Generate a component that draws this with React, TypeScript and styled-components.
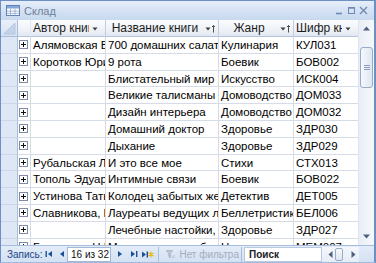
import { FC } from 'react';
import styled, { createGlobalStyle } from 'styled-components';

const GlobalStyle = createGlobalStyle`
  html, body {
    margin: 0;
    padding: 0;
  }
  body {
    background: #c4d7ef;
    font-family: 'Liberation Sans', Arial, sans-serif;
  }
`;

type Row = [string, string, string, string];

const rows: Row[] = [
  ['Алямовская Валентина', '700 домашних салатов', 'Кулинария', 'КУЛ031'],
  ['Коротков Юрий', '9 рота', 'Боевик', 'БОВ002'],
  ['', 'Блистательный мир Египта', 'Искусство', 'ИСК004'],
  ['', 'Великие талисманы', 'Домоводство', 'ДОМ033'],
  ['', 'Дизайн интерьера', 'Домоводство', 'ДОМ032'],
  ['', 'Домашний доктор', 'Здоровье', 'ЗДР030'],
  ['', 'Дыхание', 'Здоровье', 'ЗДР029'],
  ['Рубальская Лариса', 'И это все мое', 'Стихи', 'СТХ013'],
  ['Тополь Эдуард,', 'Интимные связи', 'Боевик', 'БОВ022'],
  ['Устинова Татьяна', 'Колодец забытых желаний', 'Детектив', 'ДЕТ005'],
  ['Славникова, Быков', 'Лауреаты ведущих литературных', 'Беллетристика', 'БЕЛ006'],
  ['', 'Лечебные настойки,', 'Здоровье', 'ЗДР027'],
  ['Бехтерева Н.Г.', 'Магия мозга и лабиринты жизни', 'Научные мемуары', 'МЕМ007'],
];

const headers: { title: string; sorted?: boolean }[] = [
  { title: 'Автор книги' },
  { title: 'Название книги', sorted: true },
  { title: 'Жанр', sorted: true },
  { title: 'Шифр книги' },
];

const TableIcon = () => (
  <svg width="14" height="11" viewBox="0 0 14 11">
    <rect x="0.5" y="0.5" width="13" height="10" fill="#fff" stroke="#5f83b8" />
    <rect x="1" y="1" width="12" height="2.5" fill="#86a8d8" />
    <path d="M4.5 3.5v7M9 3.5v7M1 6.2h12M1 8.4h12" stroke="#8fa9cf" strokeWidth="0.8" />
  </svg>
);

const MinIcon = () => (
  <svg width="9" height="9" viewBox="0 0 9 9">
    <path d="M1 7.5h6" stroke="#6f89b0" strokeWidth="1.6" />
  </svg>
);

const MaxIcon = () => (
  <svg width="9" height="9" viewBox="0 0 9 9">
    <rect x="1.5" y="1.5" width="6" height="6" fill="none" stroke="#6f89b0" strokeWidth="1" />
    <path d="M1.5 2h6" stroke="#6f89b0" strokeWidth="1.4" />
  </svg>
);

const CloseIcon = () => (
  <svg width="9" height="9" viewBox="0 0 9 9">
    <path d="M1 1l7 7M8 1l-7 7" stroke="#6f89b0" strokeWidth="1.3" />
  </svg>
);

const CornerIcon = () => (
  <svg width="13" height="13" viewBox="0 0 13 13">
    <polygon points="12,1 12,12 1,12" fill="#c3d3ea" stroke="#aebfd9" strokeWidth="0.8" />
  </svg>
);

const PlusBox = () => (
  <svg width="9" height="9" viewBox="0 0 9 9">
    <rect x="0.5" y="0.5" width="8" height="8" fill="#fff" stroke="#7d8ba3" />
    <path d="M2 4.5h5M4.5 2v5" stroke="#111" strokeWidth="1" />
  </svg>
);

const DropArrow: FC<{ sorted?: boolean }> = ({ sorted }) => (
  <svg width="11" height="9" viewBox="0 0 11 9">
    <polygon points="0.5,3.5 5.5,3.5 3,6.5" fill="#3d3d3d" />
    {sorted && <path d="M8.5 1.5v7M7 3l1.5-1.5L10 3" stroke="#3d3d3d" strokeWidth="0.9" fill="none" />}
  </svg>
);

const NavFirst = () => (
  <svg width="8" height="8" viewBox="0 0 8 8">
    <rect x="0.5" y="1" width="1.4" height="6" fill="#1e4f93" />
    <polygon points="7,1 7,7 3,4" fill="#1e4f93" />
  </svg>
);

const NavPrev = () => (
  <svg width="6" height="8" viewBox="0 0 6 8">
    <polygon points="5,1 5,7 1,4" fill="#1e4f93" />
  </svg>
);

const NavNext = () => (
  <svg width="6" height="8" viewBox="0 0 6 8">
    <polygon points="1,1 1,7 5,4" fill="#1e4f93" />
  </svg>
);

const NavLast = () => (
  <svg width="8" height="8" viewBox="0 0 8 8">
    <polygon points="1,1 1,7 5,4" fill="#1e4f93" />
    <rect x="6" y="1" width="1.4" height="6" fill="#1e4f93" />
  </svg>
);

const NavNew = () => (
  <svg width="13" height="9" viewBox="0 0 13 9">
    <polygon points="1,1.5 1,7.5 5,4.5" fill="#1e4f93" />
    <rect x="5.6" y="1.5" width="1.4" height="6" fill="#1e4f93" />
    <path d="M10 1.5v6M7.4 3l5.2 3M12.6 3l-5.2 3" stroke="#e9b720" strokeWidth="1.2" />
  </svg>
);

const FunnelIcon = () => (
  <svg width="12" height="11" viewBox="0 0 12 11">
    <polygon points="0.5,0.5 8.5,0.5 5.5,4.5 5.5,9.5 3.5,8 3.5,4.5" fill="#c2c9d4" stroke="#9aa4b4" strokeWidth="0.8" />
    <path d="M7.5 6.5l3.5 3.5M11 6.5l-3.5 3.5" stroke="#b4bcc8" strokeWidth="1.1" />
  </svg>
);

const UpArrow = () => (
  <svg width="7" height="5" viewBox="0 0 7 5">
    <polygon points="0,4.5 7,4.5 3.5,0.5" fill="#4e5f7e" />
  </svg>
);

const DownArrow = () => (
  <svg width="7" height="5" viewBox="0 0 7 5">
    <polygon points="0,0.5 7,0.5 3.5,4.5" fill="#4e5f7e" />
  </svg>
);

const LeftArrow = () => (
  <svg width="5" height="7" viewBox="0 0 5 7">
    <polygon points="4.5,0 4.5,7 0.5,3.5" fill="#4e5f7e" />
  </svg>
);

const RightArrow = () => (
  <svg width="5" height="7" viewBox="0 0 5 7">
    <polygon points="0.5,0 0.5,7 4.5,3.5" fill="#4e5f7e" />
  </svg>
);

export default function App() {
  return (
    <>
      <GlobalStyle />
      <Window>
        <TitleBar>
          <TableIcon />
          <Title>Склад</Title>
          <Controls>
            <MinIcon />
            <MaxIcon />
            <CloseIcon />
          </Controls>
        </TitleBar>
        <Main>
          <Sheet>
            <CornerCell>
              <CornerIcon />
            </CornerCell>
            <HeaderCell $empty />
            {headers.map(({ title, sorted }) => (
              <HeaderCell key={title}>
                <HeaderText>{title}</HeaderText>
                <DropArrow sorted={sorted} />
              </HeaderCell>
            ))}
            {rows.map((row) => (
              <RowGroup key={row[3]}>
                <SelectorCell />
                <ExpandCell>
                  <PlusBox />
                </ExpandCell>
                {row.map((value, i) => (
                  <Cell key={i}>{value}</Cell>
                ))}
              </RowGroup>
            ))}
          </Sheet>
          <VScroll>
            <ScrollButton>
              <UpArrow />
            </ScrollButton>
            <Track>
              <Thumb>
                <Grip />
              </Thumb>
            </Track>
            <ScrollButton>
              <DownArrow />
            </ScrollButton>
          </VScroll>
        </Main>
        <NavBar>
          <NavLabel>Запись:</NavLabel>
          <NavButton $w={11}>
            <NavFirst />
          </NavButton>
          <NavButton $w={13} $end>
            <NavPrev />
          </NavButton>
          <RecordBox>16 из 32</RecordBox>
          <NavButton $w={18}>
            <NavNext />
          </NavButton>
          <NavButton $w={10}>
            <NavLast />
          </NavButton>
          <NavButton $w={17}>
            <NavNew />
          </NavButton>
          <Separator />
          <FilterState>
            <FunnelIcon />
            Нет фильтра
          </FilterState>
          <Separator />
          <SearchBox>Поиск</SearchBox>
          <HScroll>
            <HArrow>
              <LeftArrow />
            </HArrow>
            <HThumb />
            <HSpacer />
            <HArrow>
              <RightArrow />
            </HArrow>
          </HScroll>
          <NavFiller />
        </NavBar>
      </Window>
    </>
  );
}

const Window = styled.div`
  box-sizing: border-box;
  width: 376px;
  height: 263px;
  display: flex;
  flex-direction: column;
  border: 1px solid #6d90c2;
  border-right-width: 2px;
  border-bottom-color: #9fbbe2;
  background: #fff;
  overflow: hidden;
`;

const TitleBar = styled.div`
  height: 19px;
  flex-shrink: 0;
  display: flex;
  align-items: center;
  gap: 4px;
  padding: 0 5px 0 5px;
  background: linear-gradient(#e6eefa, #d3e1f3 55%, #c8d9ef);
`;

const Title = styled.span`
  font-size: 11px;
  color: #6e8098;
  flex: 1;
`;

const Controls = styled.div`
  display: flex;
  align-items: center;
  gap: 3px;
  padding-right: 1px;
`;

const Main = styled.div`
  flex: 1;
  min-height: 0;
  display: flex;
`;

const Sheet = styled.div`
  width: 358px;
  display: grid;
  grid-template-columns: 17px 13px 75px 113px 75px 65px;
  grid-template-rows: 17px;
  grid-auto-rows: 16.8px;
  align-content: start;
  overflow: hidden;
  font-size: 11.5px;
  color: #000;
`;

const RowGroup = styled.div`
  display: contents;
`;

const CornerCell = styled.div`
  box-sizing: border-box;
  display: flex;
  align-items: flex-end;
  justify-content: flex-end;
  padding: 0 1px 1px 0;
  background: linear-gradient(#e9f0f9, #d6e2f2);
  border-right: 1px solid #a9bcd8;
  border-bottom: 1px solid #a9bcd8;
`;

const HeaderCell = styled.div<{ $empty?: boolean }>`
  box-sizing: border-box;
  display: flex;
  align-items: center;
  padding: 0 2px 0 2px;
  gap: 3px;
  background: linear-gradient(#fbfcfe, #eef2f8 60%, #e2e8f1);
  border-right: 1px solid ${({ $empty }) => ($empty ? '#e2e8f1' : '#c3cedf')};
  border-bottom: 1px solid #b4c3d9;
  overflow: hidden;
  font-size: 12px;
`;

const HeaderText = styled.span`
  flex: 1;
  min-width: 0;
  text-align: center;
  white-space: nowrap;
  overflow: hidden;
  color: #1c1c1c;
`;

const SelectorCell = styled.div`
  box-sizing: border-box;
  background: #dde7f5;
  border-right: 1px solid #a9bcd8;
  border-bottom: 1px solid #cbd8ea;
`;

const ExpandCell = styled.div`
  box-sizing: border-box;
  display: flex;
  align-items: center;
  justify-content: center;
  padding-right: 1px;
  border-right: 1px solid #d5dce8;
  border-bottom: 1px solid #d5dce8;
`;

const Cell = styled.div`
  box-sizing: border-box;
  padding: 0 2px;
  line-height: 16px;
  white-space: nowrap;
  overflow: hidden;
  border-right: 1px solid #d5dce8;
  border-bottom: 1px solid #d5dce8;
`;

const VScroll = styled.div`
  width: 15px;
  display: flex;
  flex-direction: column;
  background: linear-gradient(90deg, #e9eef6, #f6f8fb);
  border-left: 1px solid #dfe5ee;
`;

const ScrollButton = styled.div`
  height: 17px;
  flex-shrink: 0;
  display: flex;
  align-items: center;
  justify-content: center;
`;

const Track = styled.div`
  flex: 1;
  padding: 10px 1px 0 1px;
`;

const Thumb = styled.div`
  box-sizing: border-box;
  height: 41px;
  border: 1px solid #98abc6;
  border-radius: 3px;
  background: linear-gradient(90deg, #f5f8fc, #dfe7f2);
  display: flex;
  align-items: center;
  justify-content: center;
`;

const Grip = styled.div`
  width: 6px;
  height: 5px;
  background: repeating-linear-gradient(#8b9cb6 0 1px, transparent 1px 2px);
`;

const NavBar = styled.div`
  height: 16px;
  flex-shrink: 0;
  display: flex;
  align-items: center;
  background: linear-gradient(#e3ecf8, #d3e1f3);
  border-top: 1px solid #a6bcdc;
  font-size: 10px;
`;

const NavLabel = styled.span`
  box-sizing: border-box;
  width: 42px;
  flex-shrink: 0;
  padding-left: 6px;
  color: #1b4587;
  white-space: nowrap;
  overflow: hidden;
`;

const NavButton = styled.div<{ $w: number; $end?: boolean }>`
  box-sizing: border-box;
  width: ${({ $w }) => $w}px;
  flex-shrink: 0;
  height: 14px;
  display: flex;
  align-items: center;
  justify-content: ${({ $end }) => ($end ? 'flex-end' : 'center')};
  padding-right: ${({ $end }) => ($end ? '2px' : '0')};
`;

const RecordBox = styled.div`
  box-sizing: border-box;
  width: 44px;
  flex-shrink: 0;
  height: 15px;
  padding-left: 3px;
  line-height: 13px;
  background: #fff;
  border: 1px solid #a4b8d6;
  color: #111;
  white-space: nowrap;
`;

const Separator = styled.div`
  width: 1px;
  flex-shrink: 0;
  height: 15px;
  margin: 0 2px;
  background: #a9bedc;
`;

const FilterState = styled.div`
  box-sizing: border-box;
  width: 78px;
  flex-shrink: 0;
  display: flex;
  align-items: center;
  gap: 4px;
  padding-left: 5px;
  color: #a5adbb;
  white-space: nowrap;
`;

const SearchBox = styled.div`
  box-sizing: border-box;
  width: 78px;
  flex-shrink: 0;
  height: 15px;
  padding-left: 4px;
  line-height: 13px;
  background: #fff;
  border: 1px solid #b9c9e0;
  color: #222;
  font-weight: bold;
`;

const HScroll = styled.div`
  box-sizing: border-box;
  width: 37px;
  flex-shrink: 0;
  height: 15px;
  display: flex;
  align-items: center;
  padding: 0 3px 0 5px;
  background: linear-gradient(#f4f7fb, #e7edf6);
`;

const HArrow = styled.div`
  width: 6px;
  display: flex;
  justify-content: center;
`;

const HThumb = styled.div`
  box-sizing: border-box;
  width: 8px;
  height: 13px;
  margin-left: 2px;
  border: 1px solid #98abc6;
  border-radius: 2px;
  background: linear-gradient(#f7f9fc, #dde6f1);
`;

const HSpacer = styled.div`
  flex: 1;
`;

const NavFiller = styled.div`
  flex: 1;
`;
